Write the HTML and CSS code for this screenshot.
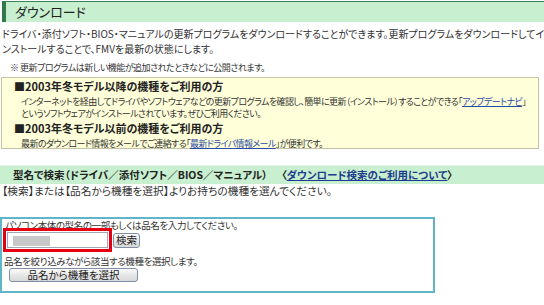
FILE: index.html
```html
<!DOCTYPE html>
<html lang="ja">
<head>
<meta charset="utf-8">
<link rel="stylesheet" href="styles.css">
</head>
<body>
<div class="page">
  <h1 class="page-head">ダウンロード</h1>
  <p class="intro">ドライバ・添付ソフト・BIOS・マニュアルの更新プログラムをダウンロードすることができます。更新プログラムをダウンロードしてイ<br>ンストールすることで、FMVを最新の状態にします。</p>
  <p class="note">※ 更新プログラムは新しい機能が追加されたときなどに公開されます。</p>
  <div class="notice">
    <h2 class="notice-title">■2003年冬モデル以降の機種をご利用の方</h2>
    <p class="notice-body">インターネットを経由してドライバやソフトウェアなどの更新プログラムを確認し、簡単に更新（インストール）することができる「<a href="#">アップデートナビ</a>」<br>というソフトウェアがインストールされています。ぜひご利用ください。</p>
    <h2 class="notice-title">■2003年冬モデル以前の機種をご利用の方</h2>
    <p class="notice-body">最新のダウンロード情報をメールでご連絡する「<a href="#">最新ドライバ情報メール</a>」が便利です。</p>
  </div>
  <h2 class="section-head">型名で検索（ドライバ／添付ソフト／BIOS／マニュアル）<span class="head-link">〈<a href="#">ダウンロード検索のご利用について</a>〉</span></h2>
  <p class="lead">【検索】または【品名から機種を選択】よりお持ちの機種を選んでください。</p>
  <div class="search-box">
    <p class="search-label">パソコン本体の型名の一部もしくは品名を入力してください。</p>
    <div class="search-row">
      <div class="highlight"><div class="field"><span class="blur"></span></div></div>
      <button class="btn btn-search">検索</button>
    </div>
    <p class="search-label second">品名を絞り込みながら該当する機種を選択します。</p>
    <button class="btn btn-select">品名から機種を選択</button>
  </div>
</div>
</body>
</html>
```
FILE: styles.css
```css
* { box-sizing: border-box; }
html, body { margin: 0; padding: 0; background: #fff; }
body {
  font-family: "Noto Sans CJK JP", "Noto Sans", sans-serif;
  font-feature-settings: "palt";
  font-size: 10px;
  color: #333;
  width: 544px;
}
p, h1, h2 { margin: 0; font-weight: normal; }
a { color: #2a4aa8; text-decoration: underline; }

.page { padding-top: 1px; }

.page-head {
  margin-left: 2px;
  height: 21px;
  border-top: 1px solid #3f7f55;
  border-left: 4px solid #2f7a48;
  background: #c8efcf;
  padding-left: 9px;
  font-size: 13px;
  line-height: 20px;
  color: #222;
}

.intro {
  margin-top: 4px;
  padding-left: 2px;
  font-size: 10px;
  line-height: 15px;
  white-space: nowrap;
}

.note {
  margin-top: 5px;
  padding-left: 10px;
  font-size: 9px;
  letter-spacing: -0.5px;
  line-height: 14px;
}

.notice {
  margin: 2px 5px 0 1px;
  border: 1px solid #c4c4a4;
  background: #ffffd9;
  padding: 1px 0 0 12px;
  height: 72px;
}
.notice-title {
  font-weight: bold;
  font-size: 11px;
  line-height: 14px;
  color: #222;
}
.notice-body {
  padding-left: 7px;
  margin-top: 3px;
  margin-bottom: 1px;
  font-size: 9px;
  letter-spacing: -0.6px;
  line-height: 12px;
  white-space: nowrap;
}

.section-head {
  margin-top: 16px;
  height: 19px;
  border-top: 1px solid #e0f5e4;
  background: #c8efcf;
  padding-left: 13px;
  font-weight: bold;
  font-size: 10.5px;
  line-height: 18px;
  color: #222;
}
.head-link { margin-left: 14px; }
.head-link a { color: #1c3c8c; }

.lead {
  padding-left: 2px;
  font-size: 10.7px;
  line-height: 14px;
}

.search-box {
  margin-top: 19px;
  width: 435px;
  height: 76px;
  border: 2px solid #5fb6c8;
  padding: 0 0 0 1px;
}
.search-label {
  font-size: 9.5px;
  letter-spacing: -0.4px;
  line-height: 12px;
  padding-left: 2px;
}
.search-label.second { margin-top: 3px; padding-left: 1px; }

.search-row {
  display: flex;
  align-items: center;
  gap: 1px;
  margin-top: -3px;
}
.highlight {
  border: 3px solid #e60012;
  width: 109px;
  height: 24px;
  padding: 1px;
}
.field {
  height: 16px;
  border: 1px solid #a0a8b8;
  background: #fff;
  padding: 3px 0 0 5px;
}
.blur {
  display: block;
  width: 37px;
  height: 10px;
  background: #c8c8c8;
}

.btn {
  font-family: inherit;
  font-feature-settings: "palt";
  font-size: 10.5px;
  color: #222;
  border: 1px solid #7f8fa8;
  border-radius: 3px;
  background: linear-gradient(#fbfbfb, #e6e6e6 55%, #d8d8d8);
  padding: 0;
  line-height: 12px;
}
.btn-search { width: 27px; height: 15px; }
.btn-select {
  margin-left: 6px;
  width: 129px;
  height: 14px;
}
```
